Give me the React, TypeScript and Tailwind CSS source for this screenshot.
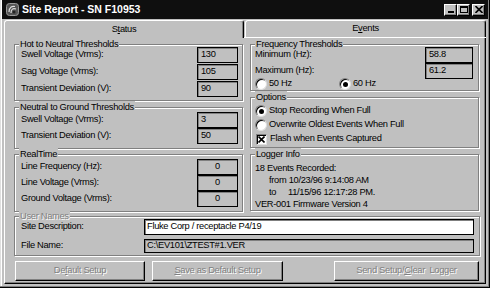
import React, { ReactNode } from "react";

interface GroupProps {
  title: string;
  disabled?: boolean;
  className?: string;
  children: ReactNode;
}

const Group: React.FC<GroupProps> = ({ title, disabled, className = "", children }) => (
  <div className={`relative border border-[#808080] shadow-[1px_1px_0_#fff,inset_1px_1px_0_#fff] ${className}`}>
    <span
      className={`absolute -top-[7px] left-[4px] px-[1px] bg-[#c0c0c0] leading-[12px] ${
        disabled ? "text-[#808080] [text-shadow:1px_1px_0_#fff]" : ""
      }`}
    >
      {title}
    </span>
    {children}
  </div>
);

const ValueBox = ({ value, wide, center }: { value: string; wide?: boolean; center?: boolean }) => (
  <div
    className={`h-[16px] ${wide ? "w-[48px]" : "w-[41px]"} border border-black shadow-[inset_1px_1px_0_#808080] flex items-center leading-none ${
      center ? "justify-center" : "pl-[3px]"
    }`}
  >
    {value}
  </div>
);

const Row = ({ label, value, wide, center }: { label: string; value: string; wide?: boolean; center?: boolean }) => (
  <div className="h-[16px] flex items-center justify-between">
    <span>{label}</span>
    <ValueBox value={value} wide={wide} center={center} />
  </div>
);

const Radio = ({ checked }: { checked?: boolean }) => (
  <span className="w-[12px] h-[12px] shrink-0 rounded-full bg-white border border-t-[#808080] border-l-[#808080] border-b-[#dfdfdf] border-r-[#dfdfdf] shadow-[inset_1px_1px_0_#000] flex items-center justify-center">
    {checked && <span className="w-[5px] h-[5px] rounded-full bg-black" />}
  </span>
);

const Check = () => (
  <span className="w-[11px] h-[11px] shrink-0 bg-white border border-t-[#808080] border-l-[#808080] border-b-[#dfdfdf] border-r-[#dfdfdf] shadow-[inset_1px_1px_0_#000] flex items-center justify-center">
    <svg width="7" height="7" viewBox="0 0 7 7">
      <path d="M0.5 0.5 L6.5 6.5 M6.5 0.5 L0.5 6.5" stroke="#000" strokeWidth="1.6" />
    </svg>
  </span>
);

const Button = ({ w, children }: { w: string; children: ReactNode }) => (
  <div
    className={`${w} h-[20px] border border-t-white border-l-white border-b-black border-r-black shadow-[inset_-1px_-1px_0_#808080] flex items-center justify-center text-[#808080] [text-shadow:1px_1px_0_#fff] whitespace-pre`}
  >
    {children}
  </div>
);

const CapButton = ({ children }: { children: ReactNode }) => (
  <div className="w-[13px] h-[12px] bg-[#c0c0c0] border border-t-white border-l-white border-b-black border-r-black shadow-[inset_-1px_-1px_0_#808080] flex items-center justify-center">
    {children}
  </div>
);

export default function App() {
  return (
    <div className="w-[490px] h-[288px] overflow-hidden bg-[#c0c0c0] text-black text-[9.3px] tracking-[-0.3px] font-['Liberation_Sans_Narrow','Liberation_Sans',Arial,sans-serif] flex flex-col px-[2px] pb-[4px] shadow-[inset_-1px_-1px_0_#000,inset_-2px_-2px_0_#808080,inset_1px_0_0_#dfdfdf,inset_2px_0_0_#fff]">
      {/* title bar */}
      <div className="h-[19px] shrink-0 bg-[#0f0f0f] flex items-center pl-[4px] pr-[3px]">
        <svg width="13" height="13" viewBox="0 0 13 13" className="shrink-0">
          <rect x="0.5" y="0.5" width="12" height="12" rx="3" fill="#555" stroke="#999" />
          <path d="M3 9 C3 4 6 3 9 3.5 M5 10 C5 6 7 5 10 6" stroke="#ddd" strokeWidth="1.2" fill="none" />
          <circle cx="8" cy="9" r="1.5" fill="#222" />
        </svg>
        <span className="ml-[3px] text-white font-bold text-[10.5px] tracking-normal font-['Liberation_Sans',Arial,sans-serif]">
          Site Report - SN F10953
        </span>
        <div className="ml-auto flex items-center">
          <CapButton>
            <span className="mt-[5px] w-[6px] h-[2px] bg-black" />
          </CapButton>
          <CapButton>
            <span className="w-[8px] h-[7px] border border-black border-t-2" />
          </CapButton>
          <div className="ml-[2px]">
            <CapButton>
              <svg width="8" height="7" viewBox="0 0 8 7">
                <path d="M0.5 0 L7.5 7 M7.5 0 L0.5 7" stroke="#000" strokeWidth="1.6" />
              </svg>
            </CapButton>
          </div>
        </div>
      </div>

      <div className="mx-[2px] mt-[1px] flex-1 flex flex-col">
        {/* tabs */}
        <div className="h-[18px] shrink-0 flex">
          <div className="w-[240px] h-[18px] border-t border-l border-t-white border-l-white border-r border-r-black rounded-t-[3px] shadow-[inset_-1px_0_0_#808080] flex items-center justify-center">
            <span>
              S<span className="underline">t</span>atus
            </span>
          </div>
          <div className="flex-1 border-b border-b-white pl-[1px] flex">
            <div className="flex-1 h-[17px] border-t border-l border-t-white border-l-white border-r border-r-black rounded-t-[3px] shadow-[inset_-1px_0_0_#808080] flex items-center justify-center">
              <span>
                E<span className="underline">v</span>ents
              </span>
            </div>
          </div>
        </div>

        {/* panel */}
        <div className="flex-1 flex flex-col border-l border-l-white border-r border-r-black border-b border-b-black shadow-[inset_-1px_-1px_0_#808080] pl-[9px] pr-[5px] pt-[6px] pb-[1px]">
          <div className="flex items-start gap-[7px]">
            {/* left column */}
            <div className="w-[229px] flex flex-col">
              <Group title="Hot to Neutral Thresholds" className="pl-[6px] pr-[4px] pt-[2px] pb-[3px] flex flex-col gap-[1px]">
                <Row label="Swell Voltage (Vrms):" value="130" />
                <Row label="Sag Voltage (Vrms):" value="105" />
                <Row label="Transient Deviation (V):" value="90" />
              </Group>
              <Group title="Neutral to Ground Thresholds" className="mt-[6px] pl-[6px] pr-[4px] pt-[4px] pb-[4px] flex flex-col">
                <Row label="Swell Voltage (Vrms):" value="3" />
                <Row label="Transient Deviation (V):" value="50" />
              </Group>
              <Group title="RealTime" className="mt-[5px] pl-[6px] pr-[4px] pt-[4px] pb-[4px] flex flex-col">
                <Row label="Line Frequency (Hz):" value="0" center />
                <Row label="Line Voltage (Vrms):" value="0" center />
                <Row label="Ground Voltage (Vrms):" value="0" center />
              </Group>
            </div>

            {/* right column */}
            <div className="w-[229px] flex flex-col">
              <Group title="Frequency Thresholds" className="pl-[4px] pr-[5px] pt-[2px] pb-[1px] flex flex-col">
                <Row label="Minimum (Hz):" value="58.8" wide />
                <Row label="Maximum (Hz):" value="61.2" wide />
                <div className="h-[10px] flex items-center">
                  <div className="w-[84px] flex items-center gap-[2px]">
                    <Radio />
                    <span>50 Hz</span>
                  </div>
                  <div className="flex items-center gap-[2px]">
                    <Radio checked />
                    <span>60 Hz</span>
                  </div>
                </div>
              </Group>
              <Group title="Options" className="mt-[6px] pl-[4px] pr-[5px] pt-[6px] pb-[1px] flex flex-col">
                <div className="h-[14px] flex items-center gap-[2px]">
                  <Radio checked />
                  <span>Stop Recording When Full</span>
                </div>
                <div className="h-[14px] flex items-center gap-[2px]">
                  <Radio />
                  <span>Overwrite Oldest Events When Full</span>
                </div>
                <div className="h-[14px] flex items-center gap-[3px] pl-[1px]">
                  <Check />
                  <span>Flash when Events Captured</span>
                </div>
              </Group>
              <Group title="Logger Info" className="mt-[6px] pl-[4px] pr-[5px] pt-[7px] leading-[12px] flex flex-col">
                <div className="h-[12px]">18 Events Recorded:</div>
                <div className="h-[12px] pl-[14px]">from 10/23/96 9:14:08 AM</div>
                <div className="h-[12px] pl-[14px] flex">
                  <span className="w-[19px]">to</span>
                  <span>11/15/96 12:17:28 PM.</span>
                </div>
                <div className="h-[12px]">VER-001 Firmware Version 4</div>
              </Group>
            </div>
          </div>

          <Group title="User Names" disabled className="mt-[4px] pl-[6px] pr-[5px] pt-[2px] pb-[2px] flex flex-col gap-[4px]">
            <div className="h-[16px] flex items-center">
              <span className="w-[123px] shrink-0">Site Description:</span>
              <div className="flex-1 h-[16px] bg-white border border-black shadow-[inset_1px_1px_0_#808080] flex items-center pl-[2px]">
                Fluke Corp / receptacle P4/19
              </div>
            </div>
            <div className="h-[14px] flex items-center">
              <span className="w-[123px] shrink-0">File Name:</span>
              <div className="flex-1 h-[14px] border border-black shadow-[inset_1px_1px_0_#808080] flex items-center pl-[2px]">
                {"C:\\EV101\\ZTEST#1.VER"}
              </div>
            </div>
          </Group>

          <div className="mt-[5px] h-[20px] flex pl-[1px] pr-[1px]">
            <Button w="w-[130px]">
              <span>
                De<span className="underline">f</span>ault Setup
              </span>
            </Button>
            <div className="ml-[7px]">
              <Button w="w-[131px]">
                <span>
                  <span className="underline">S</span>ave as Default Setup
                </span>
              </Button>
            </div>
            <div className="ml-auto">
              <Button w="w-[145px]">
                <span>
                  Send Setup/<span className="underline">C</span>lear  Logger
                </span>
              </Button>
            </div>
          </div>
        </div>
      </div>
    </div>
  );
}
